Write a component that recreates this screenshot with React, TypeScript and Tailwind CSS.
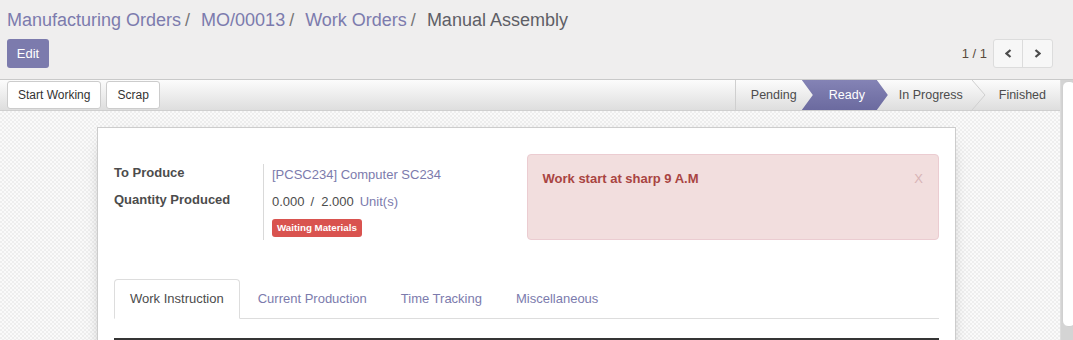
import React from 'react';

function PagerArrow({ dir }: { dir: 'left' | 'right' }) {
  const pts = dir === 'left' ? '5.5,1 1.5,4.5 5.5,8' : '1.5,1 5.5,4.5 1.5,8';
  return (
    <svg width="7" height="9" viewBox="0 0 7 9">
      <polyline points={pts} fill="none" stroke="#4c4c4c" strokeWidth="2.2" />
    </svg>
  );
}

export default function App() {
  return (
    <div className="w-[1073px] h-[340px] overflow-hidden bg-white font-['Liberation_Sans',Arial,sans-serif] text-[13px] text-[#4c4c4c]">
      {/* Control panel */}
      <div className="h-[80px] bg-[#efeeee] border-b border-[#c9c9c9] pl-[7px] pr-[20px] pt-[10px]">
        <div className="flex items-baseline text-[18px] leading-[20px]">
          <span className="text-[#7c7bad]">Manufacturing Orders</span>
          <span className="ml-[4px] mr-[11px] text-[#777]">/</span>
          <span className="text-[#7c7bad]">MO/00013</span>
          <span className="ml-[4px] mr-[11px] text-[#777]">/</span>
          <span className="text-[#7c7bad]">Work Orders</span>
          <span className="ml-[4px] mr-[11px] text-[#777]">/</span>
          <span className="text-[#5e5e66]">Manual Assembly</span>
        </div>
        <div className="mt-[9px] flex items-center justify-between">
          <button className="w-[42px] h-[29px] rounded-[3px] bg-[#7c7bad] text-white text-[13px] flex items-center justify-center">
            Edit
          </button>
          <div className="flex items-center gap-[6px]">
            <span className="text-[13px] text-[#5a4a3c]">1 / 1</span>
            <div className="flex h-[29px] rounded-[3px] border border-[#dcdcdc] bg-[#f7f7f7]">
              <div className="w-[29px] flex items-center justify-center border-r border-[#dcdcdc]">
                <PagerArrow dir="left" />
              </div>
              <div className="w-[29px] flex items-center justify-center">
                <PagerArrow dir="right" />
              </div>
            </div>
          </div>
        </div>
      </div>

      <div className="flex h-[260px]">
        <div className="w-[1060px] flex flex-col">
          {/* Status bar */}
          <div className="h-[31px] shrink-0 border-b border-[#cfcfcf] bg-[linear-gradient(to_bottom,#fcfcfc,#dedede)] flex justify-between">
            <div className="flex items-center gap-[5px] pl-[7px]">
              <button className="h-[28px] px-[10px] bg-white border border-[#cccccc] rounded-[3px] text-[12px] text-[#333]">
                Start Working
              </button>
              <button className="h-[28px] px-[10px] bg-white border border-[#cccccc] rounded-[3px] text-[12px] text-[#333]">
                Scrap
              </button>
            </div>
            <div className="flex items-stretch h-full text-[12.5px] mr-[2px]">
              <div className="w-[67px] border-l border-[#cfcfcf] pl-[15px] flex items-center">Pending</div>
              <div className="w-[86px] pl-[27px] flex items-center text-white bg-[linear-gradient(to_bottom,#8483b5,#6b6a9f)] [clip-path:polygon(0_0,calc(100%_-_11px)_0,100%_50%,calc(100%_-_11px)_100%,0_100%,11px_50%)]">
                Ready
              </div>
              <div className="pl-[11px] flex items-center">In Progress</div>
              <svg width="14" height="30" viewBox="0 0 14 30" className="ml-[9px]">
                <polyline points="0,0 13,15 0,30" fill="none" stroke="#cfcfcf" strokeWidth="1" />
              </svg>
              <div className="pl-[13px] pr-[12px] flex items-center">Finished</div>
            </div>
          </div>

          {/* Sheet area */}
          <div className="flex-1 overflow-hidden bg-[image:repeating-conic-gradient(#eeeeee_0%_25%,#fafafa_0%_50%)] bg-[length:4px_4px]">
            <div className="ml-[97px] mt-[16px] w-[859px] h-[300px] bg-white border border-[#cccccc] shadow-[0_5px_20px_-15px_black] px-[16px] pt-[26px]">
              <div className="grid grid-cols-2">
                <div className="pt-[10px]">
                  <div className="flex h-[27px]">
                    <div className="w-[149px] font-bold leading-[18px]">To Produce</div>
                    <div className="border-l border-[#d9d9d9] pl-[8px] pt-[2px] leading-[18px] text-[#7c7bad]">
                      [PCSC234] Computer SC234
                    </div>
                  </div>
                  <div className="flex">
                    <div className="w-[149px] font-bold leading-[18px]">Quantity Produced</div>
                    <div className="border-l border-[#d9d9d9] pl-[8px] pt-[2px] pb-[3px] leading-[18px]">
                      <div className="flex">
                        <span>0.000</span>
                        <span className="ml-[6px]">/</span>
                        <span className="ml-[7px]">2.000</span>
                        <span className="ml-[6px] text-[#7c7bad]">Unit(s)</span>
                      </div>
                      <div className="mt-[8px] inline-flex items-center h-[18px] px-[5px] rounded-[3px] bg-[#d9534f] text-white font-bold text-[9.75px] leading-none">
                        Waiting Materials
                      </div>
                    </div>
                  </div>
                </div>
                <div className="h-[86px] rounded-[4px] border border-[#ebccd1] bg-[#f2dede] pl-[15px] pr-[15px] pt-[15px] flex justify-between">
                  <span className="font-bold leading-[18px] text-[#a94442]">Work start at sharp 9 A.M</span>
                  <span className="leading-[18px] text-[#d8b4b6]">X</span>
                </div>
              </div>

              {/* Notebook */}
              <div className="mt-[39px] flex border-b border-[#dddddd]">
                <div className="-mb-px h-[40px] px-[15px] flex items-center bg-white border border-[#dddddd] border-b-white rounded-t-[4px] mr-[2px]">
                  Work Instruction
                </div>
                <div className="-mb-px h-[40px] px-[16px] flex items-center text-[#7c7bad] mr-[2px]">Current Production</div>
                <div className="-mb-px h-[40px] px-[16px] flex items-center text-[#7c7bad] mr-[2px]">Time Tracking</div>
                <div className="-mb-px h-[40px] px-[16px] flex items-center text-[#7c7bad]">Miscellaneous</div>
              </div>
              <div className="mt-[19px] border-t-2 border-[#353535]" />
            </div>
          </div>
        </div>

        {/* Scrollbar */}
        <div className="w-[13px] border-l border-[#dcdcdc] bg-[#d4d4d4] pl-[1px] pt-[1px]">
          <div className="h-[246px] w-[14px] rounded-[6px] bg-white border border-[#d0d0d0]" />
        </div>
      </div>
    </div>
  );
}
